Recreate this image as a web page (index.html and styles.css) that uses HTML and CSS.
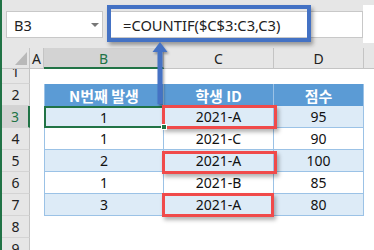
FILE: index.html
```html
<!DOCTYPE html>
<html>
<head>
<meta charset="utf-8">
<link rel="stylesheet" href="styles.css">
</head>
<body>
<div class="app">
  <div class="toolbar">
    <div class="namebox"><span class="ref">B3</span><span class="caret"></span></div>
    <div class="fx">=COUNTIF($C$3:C3,C3)</div>
    <div class="tail"></div>
  </div>
  <div class="sheet">
    <div class="ch corner"><span class="tri"></span></div>
    <div class="ch">A</div>
    <div class="ch sel">B</div>
    <div class="ch">C</div>
    <div class="ch">D</div>
    <div class="ch last"></div>

    <div class="rh r1"><span>1</span></div><div></div><div></div><div></div><div></div><div></div>

    <div class="rh">2</div><div></div>
    <div class="th first">N번째 발생</div><div class="th">학생 ID</div><div class="th end">점수</div><div></div>

    <div class="rh sel">3</div><div></div>
    <div class="td odd first active">1</div><div class="td odd">2021-A</div><div class="td odd end">95</div><div></div>

    <div class="rh">4</div><div></div>
    <div class="td first">1</div><div class="td">2021-C</div><div class="td end">90</div><div></div>

    <div class="rh">5</div><div></div>
    <div class="td odd first">2</div><div class="td odd">2021-A</div><div class="td odd end">100</div><div></div>

    <div class="rh">6</div><div></div>
    <div class="td first">1</div><div class="td">2021-B</div><div class="td end">85</div><div></div>

    <div class="rh">7</div><div></div>
    <div class="td odd first">3</div><div class="td odd">2021-A</div><div class="td odd end">80</div><div></div>

    <div class="rh">8</div><div></div><div></div><div></div><div></div><div></div>
    <div class="rh">9</div><div></div><div></div><div></div><div></div><div></div>
  </div>

  <div class="hl-formula"></div>
  <svg class="arrow" width="24" height="66" viewBox="0 0 24 66">
    <defs>
      <filter id="sh" x="-50%" y="-20%" width="200%" height="150%">
        <feDropShadow dx="1.5" dy="2" stdDeviation="1.2" flood-color="#000" flood-opacity="0.35"/>
      </filter>
    </defs>
    <g filter="url(#sh)">
      <rect x="7.5" y="9" width="5" height="54" fill="#4472c4"/>
      <polygon points="10,1 2.5,11 17.5,11" fill="#4472c4"/>
    </g>
  </svg>
  <div class="hl-cell c3"></div>
  <div class="hl-cell c5"></div>
  <div class="hl-cell c7"></div>
  <div class="handle"></div>
</div>
</body>
</html>
```

FILE: styles.css
```css
* { box-sizing: border-box; }
html, body { margin: 0; padding: 0; }
body {
  width: 374px;
  height: 250px;
  overflow: hidden;
  background: #fff;
  font-family: "Noto Sans", "Noto Sans CJK KR", sans-serif;
  color: #1a1a1a;
}
.app {
  position: relative;
  width: 374px;
  height: 250px;
  border-left: 2px solid #217346;
  overflow: hidden;
}
.toolbar {
  height: 48px;
  background: #e6e6e6;
  display: flex;
  align-items: flex-start;
  padding: 11px 0 0 4px;
}
.namebox {
  width: 97px;
  height: 27px;
  background: #fff;
  border: 1px solid #c8c8c8;
  display: flex;
  align-items: center;
  justify-content: space-between;
  padding: 0 3px 0 7px;
  font-size: 14.5px;
  color: #222;
}
.caret {
  width: 0;
  height: 0;
  border-left: 4px solid transparent;
  border-right: 4px solid transparent;
  border-top: 4px solid #777;
}
.fx {
  margin-left: 5px;
  width: 255px;
  height: 27px;
  background: #fff;
  border: 1px solid #c8c8c8;
  display: flex;
  align-items: center;
  padding-left: 14px;
  font-size: 14.7px;
  color: #222;
  white-space: nowrap;
}
.tail {
  flex: 1;
  height: 38px;
  margin-top: -6px;
  background: #fff;
}
.sheet {
  display: grid;
  grid-template-columns: 28px 14px 120px 110px 90px 1fr;
  grid-template-rows: 21px 15px repeat(8, 22px);
  font-size: 14px;
}
.sheet > div {
  display: flex;
  align-items: center;
  justify-content: center;
  overflow: hidden;
  white-space: nowrap;
}
.ch {
  background: #e6e6e6;
  border-right: 1px solid #c4c4c4;
  border-bottom: 1px solid #c4c4c4;
  color: #222;
  padding-top: 1px;
}
.ch.last { border-right: none; }
.ch.sel {
  background: #d3d3d3;
  color: #217346;
  border-bottom: 2px solid #217346;
}
.corner {
  position: relative;
  justify-content: flex-end !important;
  align-items: flex-end !important;
  padding: 0 2px 3px 0;
}
.tri {
  width: 0;
  height: 0;
  border-left: 12px solid transparent;
  border-bottom: 13px solid #b9b9b9;
}
.rh {
  background: #e6e6e6;
  border-right: 1px solid #c4c4c4;
  border-bottom: 1px solid #d4d4d4;
  color: #222;
}
.rh.r1 { align-items: flex-end !important; }
.rh.r1 span { line-height: 22px; margin-bottom: 0; transform: translateY(0); display: block; height: 22px; }
.rh.sel {
  background: #d3d3d3;
  color: #217346;
  border-right: 2px solid #217346;
}
.th {
  background: #5b9bd5;
  color: #fff;
  font-weight: 700;
  font-size: 15px;
  font-family: "Noto Sans CJK KR", "Noto Sans", sans-serif;
  border-right: 1px solid #9bc2e6;
}
.th.end { border-right: 1px solid #9bc2e6; }
.td {
  background: #fff;
  border-right: 1px solid #9bc2e6;
  border-bottom: 1px solid #9bc2e6;
  color: #111;
}
.td.odd { background: #ddebf7; }
.th.first, .td.first { border-left: 1px solid #9bc2e6; }
.td.active {
  border: 2px solid #217346;
}
.handle {
  position: absolute;
  left: 159px;
  top: 124px;
  width: 6px;
  height: 6px;
  background: #217346;
  border: 1px solid #fff;
}
.hl-formula {
  position: absolute;
  left: 105px;
  top: 5px;
  width: 204px;
  height: 37px;
  border: 4px solid #4472c4;
  box-shadow: 2px 3px 4px rgba(0,0,0,0.35);
}
.arrow {
  position: absolute;
  left: 148px;
  top: 41px;
}
.hl-cell {
  position: absolute;
  border: 3px solid #f04a4a;
  box-shadow: 2px 3px 4px rgba(0,0,0,0.3);
}
.c3 { left: 160px; top: 105px; width: 115px; height: 24px; }
.c5 { left: 160px; top: 151px; width: 115px; height: 23px; }
.c7 { left: 160px; top: 193px; width: 112px; height: 24px; }
```
